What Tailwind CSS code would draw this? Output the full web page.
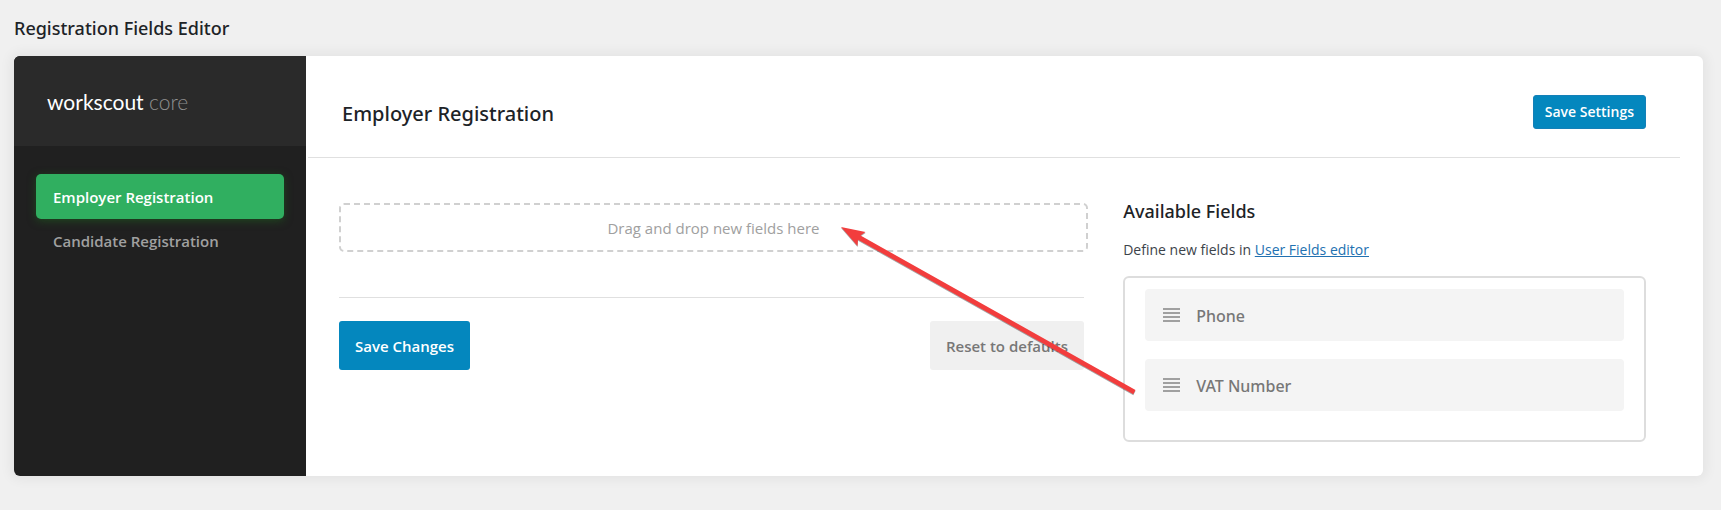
<!DOCTYPE html>
<html lang="en">
<head>
  <meta charset="UTF-8" />
  <meta name="viewport" content="width=device-width, initial-scale=1.0" />
  <title>Registration Fields Editor</title>
  <script src="https://cdn.jsdelivr.net/npm/@tailwindcss/browser@4"></script>
</head>

<body class="min-h-screen bg-[#f0f0f0] font-['Open_Sans','Noto_Sans',sans-serif] text-[#1d2327]">
  <div class="relative pl-3.5 pr-4.5 pt-3.5">
    <h1 class="mb-3.5 font-['Noto_Sans',sans-serif] text-lg leading-7 font-medium">Registration Fields Editor</h1>

    <div class="flex rounded-md bg-white shadow-[0_0_12px_4px_rgba(0,0,0,0.05)]">
      <!-- Sidebar -->
      <aside class="w-73 shrink-0 overflow-hidden rounded-l-md bg-[#202020]">
        <div class="flex h-22.5 items-center bg-[#2a2a2a] pl-8.25 pt-0.5 font-[Lato,sans-serif] text-[21px] text-white">
          <span>workscout <span class="font-light text-[#909090]">core</span></span>
        </div>
        <nav class="flex flex-col px-5.5 pt-7 text-[15px] font-semibold">
          <a href="#employer" class="flex h-11.25 items-center rounded-[5px] bg-[#30af60] px-4.25 pt-0.5 text-white shadow-[0_2px_8px_rgba(30,110,30,0.5)]">Employer Registration</a>
          <a href="#candidate" class="flex h-11.25 items-center px-4.25 text-[#a0a0a0]">Candidate Registration</a>
        </nav>
      </aside>

      <!-- Content -->
      <main class="min-w-0 grow">
        <header class="ml-0.5 mr-5.75 flex h-25.5 items-center justify-between border-b border-[#e0e0e0] pl-8.5 pr-8.5">
          <h2 class="pt-3.5 font-['Noto_Sans',sans-serif] text-xl font-medium">Employer Registration</h2>
          <button type="button" class="mt-2.5 h-8.5 rounded-[3px] border border-[#1480b8] bg-[#0487be] px-2.75 text-sm font-semibold text-white">Save Settings</button>
        </header>

        <div class="flex justify-between pb-8.5 pl-8.25 pr-14.25 pt-11.25">
          <section class="w-[57%]">
            <div class="-mr-1 flex h-12.25 items-center justify-center rounded-[5px] border-2 border-dashed border-[#d0d0d0] pt-0.5 text-[15px] text-[#a0a0a0]">Drag and drop new fields here</div>
            <hr class="mb-5.75 mt-11.25 border-[#e0e0e0]" />
            <div class="flex justify-between">
              <button type="button" class="h-12.25 rounded-[3px] bg-[#0487be] px-4 pt-0.5 text-[15px] font-semibold text-white">Save Changes</button>
              <button type="button" class="h-12.25 rounded-[3px] bg-[#f0f0f0] px-4 pt-0.5 text-[15px] font-semibold text-[#777]">Reset to defaults</button>
            </div>
          </section>

          <section class="w-[40%]">
            <h3 class="font-['Noto_Sans',sans-serif] text-lg leading-4 font-medium">Available Fields</h3>
            <p class="mt-5.25 text-sm text-[#3c434a]">Define new fields in <a href="#fields" class="text-[#2271b1] underline">User Fields editor</a></p>
            <ul class="mt-4 flex flex-col gap-4.5 rounded-md border-2 border-[#ddd] px-5 pb-7.25 pt-2.75 font-['Noto_Sans',sans-serif] text-base font-medium text-[#777]">
              <li class="flex h-13 cursor-move items-center rounded bg-[#f4f4f4] px-4.5">
                <svg class="mr-4 h-3.5 w-4.25" viewBox="0 0 17 14" fill="#a0a0a0" shape-rendering="crispEdges"><path d="M0 0h17v2H0zM0 4h17v2H0zM0 8h17v2H0zM0 12h17v2H0z" /></svg>
                <span class="pt-0.5">Phone</span>
              </li>
              <li class="flex h-13 cursor-move items-center rounded bg-[#f4f4f4] px-4.5">
                <svg class="mr-4 h-3.5 w-4.25" viewBox="0 0 17 14" fill="#a0a0a0" shape-rendering="crispEdges"><path d="M0 0h17v2H0zM0 4h17v2H0zM0 8h17v2H0zM0 12h17v2H0z" /></svg>
                <span class="pt-0.5">VAT Number</span>
              </li>
            </ul>
          </section>
        </div>
      </main>
    </div>

    <!-- Arrow from the available fields to the drop area -->
    <svg class="pointer-events-none absolute left-[841px] top-[227px] h-[170px] w-[296px] drop-shadow-[0_1px_0_rgba(0,0,0,0.35)]" viewBox="0 0 296 170" fill="#f23d3d">
      <path d="M0 0L24.500 5L19.500 8.500L294.500 163L292.300 167.200L17 12.700L16.500 19Z" />
    </svg>
  </div>
</body>
</html>
